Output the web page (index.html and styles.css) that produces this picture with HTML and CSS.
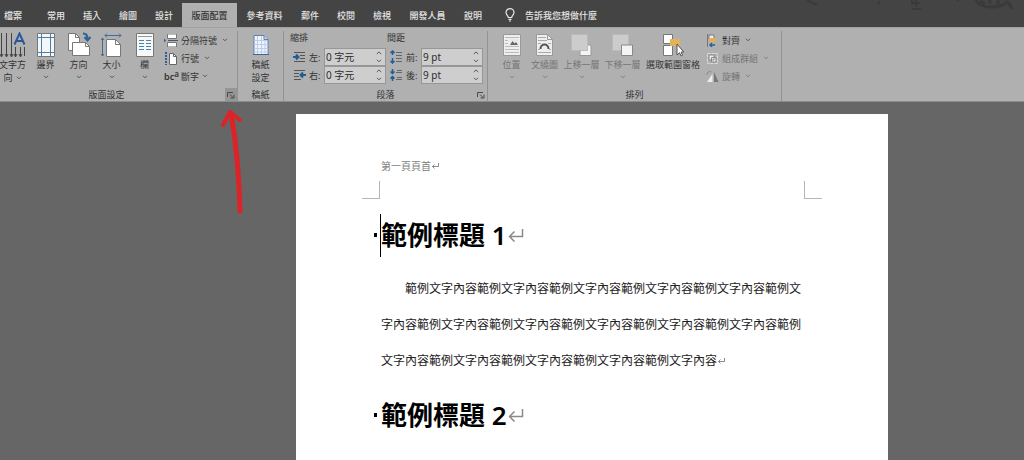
FILE: index.html
```html
<!DOCTYPE html>
<html lang="zh-Hant">
<head>
<meta charset="utf-8">
<title>版面配置</title>
<link rel="stylesheet" href="styles.css">
</head>
<body>
<svg class="defs" aria-hidden="true">
  <symbol id="chev" viewBox="0 0 6 4"><path d="M1 .8 3 2.8 5 .8" fill="none" stroke="currentColor"/></symbol>
  <symbol id="up" viewBox="0 0 6 4"><path d="M.8 3 3 .9 5.200 3" fill="none" stroke="currentColor"/></symbol>
  <symbol id="launch" viewBox="0 0 8 8"><path d="M.5 6V1.500H6M3 3.500l3.200 3.200M7 3.500V7H3.500" fill="none" stroke="currentColor"/></symbol>
  <symbol id="ret" viewBox="0 0 16 14"><path d="M14.500 1V8.500H1.500M6.500 3.500l-5 5 5 5" fill="none" stroke="currentColor" stroke-width="1.500"/></symbol>
  <symbol id="ret-s" viewBox="0 0 8 7"><path d="M7.500 0V3.500H1M3.500 1.500l-2 2 2 2" fill="none" stroke="currentColor"/></symbol>
</svg>

<header class="tabs">
  <button class="tab tab-file">檔案</button>
  <nav class="tab-list">
    <button class="tab">常用</button>
    <button class="tab">插入</button>
    <button class="tab">繪圖</button>
    <button class="tab">設計</button>
    <button class="tab tab-wide tab-active">版面配置</button>
    <button class="tab tab-wide">參考資料</button>
    <button class="tab">郵件</button>
    <button class="tab">校閱</button>
    <button class="tab">檢視</button>
    <button class="tab tab-wide">開發人員</button>
    <button class="tab">說明</button>
  </nav>
  <button class="tell">
    <svg width="10" height="14" viewBox="0 0 10 14" fill="none" stroke="#e8e8e8" stroke-width="1.200"><path d="M3.300 9.500C3.300 7.500 1 7 1 4.600a4 4 0 0 1 8 0C9 7 6.700 7.500 6.700 9.500zM3.500 11.300h3M4 13h2"/></svg>
    <span>告訴我您想做什麼</span>
  </button>
  <svg class="deco" width="224" height="12" viewBox="0 0 224 12" fill="none" stroke="#3a3a3a" stroke-width="2"><path d="M7 0l6 3 4 2M80 1l-2 3M112 0v5M116 0v7M112 3h8M112 9h9M157 0l2 1"/><path d="M176 0c2 5 8 7 15 7s14-2 17-6M180 1l5 3M190 0v4M199 0l-2 4M208 2l4 7" stroke-width="3"/></svg>
</header>

<section class="ribbon">
  <div class="group group-setup">
    <div class="body">
      <button class="big"><span class="ico"><svg width="27" height="26" viewBox="0 0 27 26" fill="none"><path d="M2.500 1v23M7.500 1v23M12.500 1v23M16.500 15v9M21.500 15v9M25.500 15v9" stroke="#444"/><path d="M1 22l1.500 3L4 22M6 22l1.500 3L9 22M11 22l1.500 3 1.500-3M15 22l1.500 3 1.500-3M20 22l1.500 3 1.500-3" stroke="#444"/><path d="M15.500 12.500 20.500 1.500l5 11M17 9h7" stroke="#2b579a" stroke-width="2"/></svg></span><span>文字方</span><span class="line2">向 <svg class="chev"><use href="#chev"/></svg></span></button>
      <button class="big"><span class="ico"><svg width="18" height="24" viewBox="0 0 18 24"><path d="M.5.5h17v23H.5z" fill="#f4f6f8" stroke="#777"/><path d="M4.500 1v22M13.500 1v22M1 4.500h16M1 19.500h16" stroke="#4b7fa8"/></svg></span><span>邊界</span><svg class="chev"><use href="#chev"/></svg></button>
      <button class="big"><span class="ico"><svg width="24" height="25" viewBox="0 0 24 25"><path d="M1.500 1.500h7l4 4v13h-11z" fill="#fff" stroke="#777"/><path d="M8.500 1.500v4h4" fill="none" stroke="#777"/><path d="M5.500 10.500h13l4 4v9h-17z" fill="#fff" stroke="#777"/><path d="M18.500 10.500v4h4" fill="none" stroke="#777"/><path d="M16 1.500c3 0 4.500 2 4.500 5M17.500 5l3 3.500L23.500 5" fill="none" stroke="#2b6195" stroke-width="2"/></svg></span><span>方向</span><svg class="chev"><use href="#chev"/></svg></button>
      <button class="big"><span class="ico"><svg width="22" height="24" viewBox="0 0 22 24"><path d="M5.500 6.500h9l5 5v12h-14z" fill="#fff" stroke="#777"/><path d="M14.500 6.500v5h5" fill="none" stroke="#777"/><path d="M4 2.500h16M6 .5l-2 2 2 2M18 .5l2 2-2 2M1.500 5v18M0 7l1.500-2L3 7M0 21l1.500 2L3 21" fill="none" stroke="#406d94"/></svg></span><span>大小</span><svg class="chev"><use href="#chev"/></svg></button>
      <button class="big"><span class="ico"><svg width="18" height="24" viewBox="0 0 18 24"><path d="M.5.5h17v23H.5z" fill="#f8f8f8" stroke="#777"/><path d="M2 3.500h14" stroke="#999"/><path d="M3 7.500h5M10 7.500h5M3 10.500h5M10 10.500h5M3 13.500h5M10 13.500h5M3 16.500h5M10 16.500h5" stroke="#3f86b5"/></svg></span><span>欄</span><svg class="chev"><use href="#chev"/></svg></button>
      <div class="smalls">
        <button class="small"><svg width="14" height="13" viewBox="0 0 14 13"><path d="M3.500 0v4.500h9V0zM3.500 13V8.500h9V13z" fill="#fff" stroke="#777"/><path d="M4 6.500h10" stroke="#555"/><path d="M0 4.500l2 2-2 2z" fill="#2b6195"/></svg><span>分隔符號</span><svg class="chev"><use href="#chev"/></svg></button>
        <button class="small"><svg width="14" height="13" viewBox="0 0 14 13"><path d="M5.500 1.500h4l3 3v8h-7z" fill="#fff" stroke="#666"/><path d="M9.500 1.500v3h3" fill="none" stroke="#666"/><path d="M2 0v13" stroke="#2b6195" stroke-width="2" stroke-dasharray="2 1"/></svg><span>行號</span><svg class="chev"><use href="#chev"/></svg></button>
        <button class="small small-hyph"><span class="hyph" aria-hidden="true">bc<sup>a</sup></span><span>斷字</span><svg class="chev"><use href="#chev"/></svg></button>
      </div>
    </div>
    <div class="label"><span>版面設定</span><button class="launch launch-hot" aria-label="版面設定對話方塊"><svg width="8" height="8"><use href="#launch"/></svg></button></div>
  </div>

  <div class="group group-grid">
    <div class="body">
      <button class="big"><span class="ico"><svg width="16" height="20" viewBox="0 0 16 20"><path d="M1 .5h10l4 4v15H1z" fill="#eef3fb" stroke="#5f7fae"/><path d="M4.500 1v18M8.500 1v18M12 4v15M1 5.500h13M1 9.500h14M1 13.500h14M1 17h14" stroke="#bccde8"/><path d="M11 .5v4h4" fill="#c9d8ee" stroke="#5f7fae"/><path d="M0 19.500h16" stroke="#3f659c"/></svg></span><span>稿紙</span><span>設定</span></button>
    </div>
    <div class="label"><span>稿紙</span></div>
  </div>

  <div class="group group-para">
    <div class="body fields">
      <div class="field-col">
        <span class="field-head">縮排</span>
        <div class="field"><svg width="13" height="12" viewBox="0 0 13 12"><path d="M1 1.500h11M7 4.500h5M7 7.500h5M1 10.500h11" stroke="#555"/><path d="M0 6h4M3 3.500 5.500 6 3 8.500" fill="none" stroke="#1f5d96" stroke-width="2"/></svg><label for="l">左:</label><span class="spin"><input id="l" value="0 字元"><span class="steps"><button aria-label="增加"><svg class="chev"><use href="#up"/></svg></button><button aria-label="減少"><svg class="chev"><use href="#chev"/></svg></button></span></span></div>
        <div class="field"><svg width="13" height="12" viewBox="0 0 13 12"><path d="M1 1.500h11M1 4.500h5M1 7.500h5M1 10.500h7" stroke="#555"/><path d="M13 6H9M10 3.500 7.500 6 10 8.500" fill="none" stroke="#1f5d96" stroke-width="2"/></svg><label for="r">右:</label><span class="spin"><input id="r" value="0 字元"><span class="steps"><button aria-label="增加"><svg class="chev"><use href="#up"/></svg></button><button aria-label="減少"><svg class="chev"><use href="#chev"/></svg></button></span></span></div>
      </div>
      <div class="field-col field-col-gap">
        <span class="field-head">間距</span>
        <div class="field"><svg width="13" height="14" viewBox="0 0 13 14"><path d="M6 2.500h6M6 5.500h6M6 8.500h6M6 11.500h6" stroke="#666"/><path d="M2.500 1v4M.5 3l2-2 2 2M2.500 8v5M.5 11l2 2 2-2" fill="none" stroke="#1f5d96" stroke-width="1.500"/></svg><label for="b">前:</label><span class="spin"><input id="b" value="9 pt"><span class="steps"><button aria-label="增加"><svg class="chev"><use href="#up"/></svg></button><button aria-label="減少"><svg class="chev"><use href="#chev"/></svg></button></span></span></div>
        <div class="field"><svg width="13" height="14" viewBox="0 0 13 14"><path d="M7 2.500h5M6 4.500h6M7 9.500h5M6 11.500h6" stroke="#666"/><path d="M2.500 1v4M.5 3.500l2 2 2-2M2.500 13V9M.5 10.500l2-2 2 2" fill="none" stroke="#1f5d96" stroke-width="1.500"/></svg><label for="a">後:</label><span class="spin"><input id="a" value="9 pt"><span class="steps"><button aria-label="增加"><svg class="chev"><use href="#up"/></svg></button><button aria-label="減少"><svg class="chev"><use href="#chev"/></svg></button></span></span></div>
      </div>
    </div>
    <div class="label"><span>段落</span><button class="launch" aria-label="段落對話方塊"><svg width="8" height="8"><use href="#launch"/></svg></button></div>
  </div>

  <div class="group group-arrange">
    <div class="body">
      <button class="big" disabled><span class="ico"><svg width="18" height="22" viewBox="0 0 18 22"><path d="M.5.500h17v21H.5z" fill="#eee" stroke="#999"/><path d="M2 3.500h14M2 6.500h3M2 9.500h3M2 12.500h14M2 15.500h14M2 18.500h14" stroke="#bbb"/><path d="M7 5h8v6H7z" fill="#e8e8e8"/><path d="M7 11l2.500-4 2 2.500L13 8l2 3z" fill="#666"/></svg></span><span>位置</span><svg class="chev"><use href="#chev"/></svg></button>
      <button class="big" disabled><span class="ico"><svg width="17" height="22" viewBox="0 0 17 22"><path d="M.5.500h11l5 5v16H.5z" fill="#eee" stroke="#999"/><path d="M11.500.5v5h5" fill="none" stroke="#999"/><path d="M2 3.500h8M2 6.500h9M2 9.500h3M12 9.500h3M2 18.500h13M2 15.500h2M13 15.500h2" stroke="#aaa"/><path d="M4.500 15c0-6 8-6 8 0" fill="none" stroke="#555" stroke-width="2"/></svg></span><span>文繞圖</span><svg class="chev"><use href="#chev"/></svg></button>
      <button class="big big-wide" disabled><span class="ico"><svg width="21" height="22" viewBox="0 0 21 22"><path d="M9 11h11v10.500H9z" fill="#f4f4f4" stroke="#999"/><path d="M.5.500h16v16H.5z" fill="#ccc" stroke="#bbb"/></svg></span><span>上移一層</span><svg class="chev"><use href="#chev"/></svg></button>
      <button class="big big-wide" disabled><span class="ico"><svg width="21" height="22" viewBox="0 0 21 22"><path d="M.5.500h16v16H.5z" fill="#ccc" stroke="#bbb"/><path d="M9.500 11h11v10.500h-11z" fill="#f4f4f4" stroke="#888"/></svg></span><span>下移一層</span><svg class="chev"><use href="#chev"/></svg></button>
      <button class="big big-pane"><span class="ico"><svg width="22" height="24" viewBox="0 0 22 24"><path d="M1.500 1.500h9v9h-9zM1.500 12.500h9v10h-9z" fill="#fff" stroke="#777"/><path d="M8 6h10v7H8z" fill="#e3b35a"/><path d="M15 11v11l2.500-2.300 1.500 3.300 1.500-.8-1.400-3.200h2.700z" fill="#fff" stroke="#555"/></svg></span><span>選取範圍窗格</span></button>
      <div class="smalls">
        <button class="small"><svg width="13" height="13" viewBox="0 0 13 13"><path d="M1.500 0v13" stroke="#777"/><path d="M3 1h5v4H3z" fill="#eee" stroke="#777"/><path d="M3 4h7v4H3z" fill="#e0ae58"/><path d="M9 11H4M6 9l-2 2 2 2" fill="none" stroke="#2b6195" stroke-width="1.500"/></svg><span>對齊</span><svg class="chev"><use href="#chev"/></svg></button>
        <button class="small" disabled><svg width="13" height="13" viewBox="0 0 13 13" fill="none"><path d="M1.500 1.500h10v10h-10z" stroke="#ddd" stroke-dasharray="3 1"/><path d="M3 3h5v5H3zM5.500 5.500h4.500V10H5.500z" fill="#eee" stroke="#888"/></svg><span>組成群組</span><svg class="chev"><use href="#chev"/></svg></button>
        <button class="small" disabled><svg width="13" height="13" viewBox="0 0 13 13"><path d="M6.500 4v8H1z" fill="#eee"/><path d="M8 2v10h4.500z" fill="#777"/><path d="M1 5c0-3 2-4 4.500-3" fill="none" stroke="#888"/></svg><span>旋轉</span><svg class="chev"><use href="#chev"/></svg></button>
      </div>
    </div>
    <div class="label"><span>排列</span></div>
  </div>
</section>

<main class="workspace">
  <article class="page">
    <div class="page-header">第一頁頁首<svg class="ret-small"><use href="#ret-s"/></svg></div>
    <div class="corners"><span class="corner corner-left"></span><span class="corner corner-right"></span></div>
    <div class="content">
      <h1 class="heading"><span class="dot"></span><span class="caret"></span>範例標題 1<svg class="ret"><use href="#ret"/></svg></h1>
      <p class="text">範例文字內容範例文字內容範例文字內容範例文字內容範例文字內容範例文字內容範例文字內容範例文字內容範例文字內容範例文字內容範例文字內容範例文字內容範例文字內容範例文字內容範例文字內容範例文字內容<svg class="ret-small"><use href="#ret-s"/></svg></p>
      <h1 class="heading"><span class="dot"></span>範例標題 2<svg class="ret"><use href="#ret"/></svg></h1>
    </div>
  </article>
</main>
<svg class="arrow" width="26" height="108" viewBox="0 0 26 108" fill="none" stroke="#dc2428" stroke-width="5" stroke-linecap="round" stroke-linejoin="round" aria-hidden="true"><path d="M20 104C19 66 17 40 11 6"/><path d="M3 18 10 5 20 13" stroke-width="4"/></svg>
</body>
</html>
```
FILE: styles.css
```css
* { box-sizing: border-box; }
body {
  margin: 0;
  min-height: 100vh;
  display: flex;
  flex-direction: column;
  overflow: hidden;
  background: #666;
  color: #333;
  font: 9px/13px "Noto Sans", "Noto Sans CJK TC", sans-serif;
}
button {
  padding: 0;
  border: 0;
  background: none;
  color: inherit;
  font: inherit;
  white-space: nowrap;
}
svg { flex: none; }
.defs { position: absolute; width: 0; height: 0; }

.tabs {
  display: flex;
  align-items: flex-end;
  height: 27px;
  background: #444;
  color: #e4e4e4;
  font-weight: 500;
}
.tab { width: 36px; height: 24px; }
.tab-file { width: 26px; margin-right: 12px; }
.tab-wide { width: 55px; }
.tab-active { background: #b0b0b0; color: #333; }
.tab-list { display: flex; }
.tell {
  display: flex;
  align-items: center;
  gap: 10px;
  height: 24px;
  margin-left: 14px;
}
.deco { margin-left: auto; align-self: flex-start; }

.ribbon {
  display: flex;
  background: #b0b0b0;
  border-top: 1px solid #a2a2a2;
  border-bottom: 1px solid #8c8c8c;
}
.group {
  display: flex;
  flex-direction: column;
  margin-top: 3px;
  border-right: 1px solid #929292;
}
.group-setup { width: 242px; margin-left: -4px; }
.group-grid { width: 46px; }
.group-para { width: 204px; }
.group-arrange { width: 294px; }
.body { display: flex; height: 57px; }
.group-grid .body { justify-content: center; }
.group-arrange .body { padding-left: 7px; }
.big {
  display: flex;
  flex-direction: column;
  align-items: center;
  width: 33px;
}
.big-wide { width: 41px; }
.big-pane { width: 60px; }
.ico {
  display: flex;
  align-items: center;
  justify-content: center;
  height: 27px;
}
.line2 { display: flex; align-items: center; gap: 3px; }
.chev { width: 6px; height: 4px; color: #555; }
.big > .chev { margin-top: 4px; }
.big:disabled, .small:disabled { color: #747474; }
.big:disabled .chev, .small:disabled .chev { color: #808080; }
.smalls { display: flex; flex-direction: column; margin-left: 3px; }
.small {
  display: flex;
  align-items: center;
  gap: 3px;
  height: 18px;
}
.small .chev { margin-left: 2px; }
.small-hyph { gap: 1px; }
.hyph { display: flex; width: 16px; font-size: 9px; font-weight: 600; }
.hyph sup { font-size: 8px; line-height: 7px; }
.label {
  display: flex;
  justify-content: center;
  height: 13px;
  position: relative;
}
.group-setup .label { padding-right: 20px; }
.launch {
  position: absolute;
  right: 0;
  top: 0;
  display: flex;
  align-items: center;
  justify-content: center;
  width: 12px;
  height: 13px;
  color: #4a4a4a;
}
.launch-hot { background: #969696; }

.fields { gap: 4px; padding-left: 6px; }
.field-col { display: flex; flex-direction: column; }
.field-head { height: 17px; }
.field {
  display: flex;
  align-items: center;
  gap: 3px;
  height: 18px;
  padding-left: 3px;
}
.field-col-gap { margin-left: -3px; }
.field label { width: 12px; white-space: nowrap; }
.spin {
  display: flex;
  width: 62px;
  height: 18px;
  background: #cecece;
  border: 1px solid #979797;
}
.spin input {
  flex: 1;
  min-width: 0;
  padding: 0 1px;
  border: 0;
  background: none;
  color: #2c2c2c;
  font: 10px/14px "Noto Sans", "Noto Sans CJK TC", sans-serif;
}
.steps { display: flex; flex-direction: column; width: 12px; }
.steps button {
  flex: 1;
  display: flex;
  align-items: center;
  justify-content: center;
}

.workspace {
  flex: 1;
  display: flex;
  justify-content: center;
  padding: 12px 0 0 160px;
}
.page {
  width: 592px;
  max-width: 100%;
  min-height: 346px;
  padding: 44px 66px 0;
  background: #fff;
}
.page-header {
  padding-left: 19px;
  color: #808080;
  font-size: 10px;
  line-height: 16px;
}
.corners { display: flex; justify-content: space-between; margin-top: 7px; }
.corner { width: 18px; height: 18px; border-bottom: 1px solid #b5b5b5; }
.corner-left { border-right: 1px solid #b5b5b5; }
.corner-right { border-left: 1px solid #b5b5b5; }
.content { padding: 12px 17px 0 19px; }
.heading {
  position: relative;
  display: flex;
  align-items: center;
  margin: 0;
  color: #000;
  font-size: 26px;
  font-weight: 600;
  line-height: 48px;
}
.dot {
  position: absolute;
  left: -7px;
  width: 3px;
  height: 4px;
  background: #000;
}
.caret {
  position: absolute;
  left: -1px;
  width: 1px;
  height: 43px;
  background: #000;
}
.ret { width: 16px; height: 14px; margin-left: 1px; color: #8a8a8a; }
.ret-small { width: 8px; height: 7px; color: #8a8a8a; }
.text {
  margin: 12px 0;
  text-indent: 24px;
  color: #222;
  font-size: 12px;
  line-height: 36px;
}
.arrow { position: absolute; left: 220px; top: 107px; }
```
